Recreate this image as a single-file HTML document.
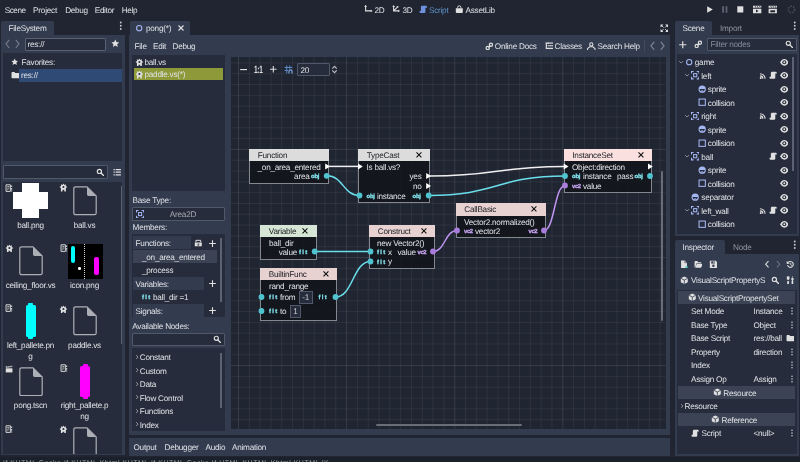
<!DOCTYPE html>
<html lang="en"><head><meta charset="utf-8"><title>Godot Engine - pong</title>
<style>
html,body{margin:0;padding:0}
.t,body{-webkit-font-smoothing:antialiased;text-rendering:geometricPrecision}
body{width:800px;height:462px;position:relative;overflow:hidden;background:#202531;color:#dfe1e5;
 font-family:"Liberation Sans",sans-serif;font-size:8.2px;}
#w{position:absolute;left:0;top:0;width:800px;height:462px;will-change:transform}
.a{position:absolute;display:block}
.t{position:absolute;display:block;line-height:12px;white-space:nowrap;letter-spacing:-0.25px}
</style></head><body><div id="w">
<span class="t" style="top:4.70px;left:4.8px;letter-spacing:-0.5px;">Scene</span>
<span class="t" style="top:4.70px;left:33px;letter-spacing:-0.2px;">Project</span>
<span class="t" style="top:4.70px;left:65.2px;letter-spacing:-0.3px;">Debug</span>
<span class="t" style="top:4.70px;left:94.8px;letter-spacing:-0.35px;">Editor</span>
<span class="t" style="top:4.70px;left:121.8px;letter-spacing:-0.4px;">Help</span>
<svg class="a" style="left:364px;top:5.0px;" width="8.6" height="8.6" viewBox="0 0 16 16"><path d="M3 1v10h10" stroke="#e0e0e0" stroke-width="2" fill="none"/><path d="M3 0L.500 3.500h5zM16 11l-3.500-2.500v5z" fill="#e0e0e0"/></svg>
<span class="t" style="top:4.70px;left:374.5px;">2D</span>
<svg class="a" style="left:392px;top:5.0px;" width="8.6" height="8.6" viewBox="0 0 16 16"><path d="M3 2v9h9M3 11L10 4" stroke="#e0e0e0" stroke-width="2" fill="none"/><path d="M3 0L.500 3.500h5zM15 11l-3.500-2.500v5zM12 2l-4 .500 3.500 3.500z" fill="#e0e0e0"/></svg>
<span class="t" style="top:4.70px;left:402.5px;">3D</span>
<svg class="a" style="left:419px;top:5.0px;" width="8.6" height="8.6" viewBox="0 0 16 16"><path d="M6 1.500c-1.400 0-2.500 1.100-2.500 2.500v7H1v1.500C1 13.900 2.100 15 3.500 15h6c1.400 0 2.500-1.100 2.500-2.500V5h3V4c0-1.400-1.100-2.500-2.500-2.500z" fill="#6f91dd"/></svg>
<span class="t" style="top:4.70px;left:429px;color:#5f93c9;">Script</span>
<svg class="a" style="left:455px;top:5.0px;" width="8.6" height="8.6" viewBox="0 0 16 16"><path d="M1.500 6h13v7.500c0 .800-.700 1.500-1.500 1.500H3c-.800 0-1.500-.700-1.500-1.500z" fill="#e0e0e0"/><path d="M5 6V4.500a3 3 0 0 1 6 0V6" stroke="#e0e0e0" stroke-width="1.800" fill="none"/></svg>
<span class="t" style="top:4.70px;left:465.5px;">AssetLib</span>
<svg class="a" style="left:700px;top:2px" width="100" height="16" viewBox="0 0 100 16"><path d="M7.200 4.200v6.600l5.600-3.300z" fill="#e0e0e0"/><path d="M22.200 4.300h1.800v6.400h-1.800zM25.600 4.300h1.800v6.400h-1.800z" fill="#5d6373"/><rect x="37.300" y="4.300" width="6" height="6.200" fill="#e0e0e0"/><path d="M53 6.700h8.300v4.500H53zM53 3.800h8.300v2H53z" fill="#e0e0e0"/><path d="M55 3.800l1 2M57.200 3.800l1 2M59.400 3.800l1 2" stroke="#202531" stroke-width=".7"/><path d="M56 7.500v2.900l2.600-1.450z" fill="#202531"/><path d="M68.600 6.700h8.300v4.500h-8.300zM68.600 3.800h8.300v2h-8.300z" fill="#e0e0e0"/><path d="M70.600 3.800l1 2M72.800 3.800l1 2M75 3.800l1 2" stroke="#202531" stroke-width=".7"/><path d="M70.300 8.300h4.800v2h-4.800z" fill="#202531"/><circle cx="91.500" cy="7.500" r="3.200" fill="none" stroke="#4a5060" stroke-width="1.400" stroke-dasharray="1.500 1.200"/></svg>
<div class="a" style="left:1px;top:21px;width:53.3px;height:15px;background:#333b4f;border-radius:2px 2px 0 0"></div>
<span class="t" style="top:22.80px;left:8.5px;">FileSystem</span>
<svg class="a" style="left:116.2px;top:20.55px;" width="9.5" height="9.5" viewBox="0 0 16 16"><circle cx="8" cy="2.500" r="1.600" fill="#c8cad0"/><circle cx="8" cy="8" r="1.600" fill="#c8cad0"/><circle cx="8" cy="13.500" r="1.600" fill="#c8cad0"/></svg>
<div class="a" style="left:1px;top:35px;width:124.3px;height:420px;background:#333b4f;"></div>
<svg class="a" style="left:4.5px;top:39.2px;" width="5" height="9.6" viewBox="0 0 5 9.600"><path d="M4.200 .800L1 4.800l3.200 4" stroke="#727989" stroke-width="1.150" fill="none"/></svg>
<svg class="a" style="left:15px;top:39.2px;" width="5" height="9.6" viewBox="0 0 5 9.600"><path d="M.800 .800L4 4.800l-3.200 4" stroke="#727989" stroke-width="1.150" fill="none"/></svg>
<div class="a" style="left:24.5px;top:37.5px;width:81px;height:13px;background:#262c3b;border:1px solid #5a6172;box-sizing:border-box;border-radius:1px"></div>
<span class="t" style="top:38.80px;left:27.5px;">res://</span>
<svg class="a" style="left:111px;top:39.2px;" width="8.6" height="8.6" viewBox="0 0 16 16"><path d="M8 1l2.200 4.700 5 .600-3.700 3.500 1 5L8 12.300 3.500 14.800l1-5L.800 6.300l5-.600z" fill="#e0e0e0"/></svg>
<div class="a" style="left:3px;top:53px;width:119.2px;height:108px;background:#262c3b;"></div>
<svg class="a" style="left:10.5px;top:58.25px;" width="7.5" height="7.5" viewBox="0 0 16 16"><path d="M8 1l2.200 4.700 5 .600-3.700 3.500 1 5L8 12.300 3.500 14.800l1-5L.800 6.300l5-.600z" fill="#e0e0e0"/></svg>
<span class="t" style="top:57.10px;left:21.5px;">Favorites:</span>
<div class="a" style="left:19px;top:69px;width:102.5px;height:12.5px;background:#2f4a75;"></div>
<svg class="a" style="left:10.5px;top:70.8px;" width="8.4" height="8.4" viewBox="0 0 16 16"><path d="M1 3.500c0-.800.700-1.500 1.500-1.500h4l1.500 2h6.500c.800 0 1.500.700 1.500 1.500v7c0 .800-.700 1.500-1.500 1.500h-12C1.700 14 1 13.300 1 12.500z" fill="#e0e0e0"/></svg>
<span class="t" style="top:70.40px;left:21px;">res://</span>
<div class="a" style="left:3px;top:165px;width:104.5px;height:14px;background:#262c3b;border:1px solid #50586a;box-sizing:border-box;border-radius:1px"></div>
<svg class="a" style="left:95.5px;top:167.8px;" width="8.4" height="8.4" viewBox="0 0 16 16"><circle cx="6.500" cy="6.500" r="4" fill="none" stroke="#e0e0e0" stroke-width="2.200"/><path d="M9.500 9.500l5 5" stroke="#e0e0e0" stroke-width="2.600" stroke-linecap="round"/></svg>
<svg class="a" style="left:112.5px;top:168.0px;" width="8.4" height="8.4" viewBox="0 0 16 16"><path d="M5 3h10M5 8h10M5 13h10" stroke="#e0e0e0" stroke-width="2.400"/><path d="M1 3h2.400M1 8h2.400M1 13h2.400" stroke="#e0e0e0" stroke-width="2.400"/></svg>
<div class="a" style="left:3px;top:182px;width:119.2px;height:271.5px;background:#262c3b;"></div>
<div class="a" style="left:120.5px;top:186px;width:1.3px;height:158px;background:#5b6272;"></div>
<svg class="a" style="left:4.8px;top:183.9px;" width="8.2" height="8.2" viewBox="0 0 16 16"><path d="M2 1.500h8.500V14.500H2z" fill="none" stroke="#e0e0e0" stroke-width="1.800"/><path d="M4.500 5h4M4.500 8h4M4.500 11h2" stroke="#e0e0e0" stroke-width="1.500"/><path d="M13 3v3M13 8v3M13 12.500v2" stroke="#e0e0e0" stroke-width="2"/></svg>
<div class="a" style="left:13px;top:191.5px;width:35px;height:17.6px;background:#fff;"></div>
<div class="a" style="left:21.8px;top:183px;width:17.6px;height:35px;background:#fff;"></div>
<span class="t" style="top:219.90px;left:-69.5px;width:200px;text-align:center;">ball.png</span>
<svg class="a" style="left:59px;top:183.1px;" width="8.8" height="8.8" viewBox="0 0 16 16"><path d="M8 .800l1.600 2.700 3-1.200-.400 3.200 3 1.800-2.700 1.700V15.500H9.600V12.300H6.400V15.500H3.500V9L.800 7.300l3-1.800-.400-3.200 3 1.200z" fill="#e0e0e0"/><circle cx="8" cy="7.300" r="1.900" fill="#262c3b"/></svg>
<svg class="a" style="left:73px;top:186px" width="24" height="29.5" viewBox="0 0 24 29.500"><path d="M2.500 .800h11.500l9.200 9.200v17c0 1-.700 1.700-1.700 1.700h-19c-1 0-1.700-.700-1.700-1.700v-24.500c0-1 .700-1.700 1.700-1.700z" fill="none" stroke="#adafb6" stroke-width="1.200"/><path d="M14 .800l9.200 9.200h-7.500c-1 0-1.700-.700-1.700-1.700z" fill="#adafb6"/></svg>
<span class="t" style="top:219.90px;left:-15.5px;width:200px;text-align:center;">ball.vs</span>
<svg class="a" style="left:4.8px;top:243.6px;" width="8.8" height="8.8" viewBox="0 0 16 16"><path d="M8 .800l1.600 2.700 3-1.200-.400 3.200 3 1.800-2.700 1.700V15.500H9.600V12.300H6.400V15.500H3.500V9L.800 7.300l3-1.800-.400-3.200 3 1.200z" fill="#e0e0e0"/><circle cx="8" cy="7.300" r="1.900" fill="#262c3b"/></svg>
<svg class="a" style="left:19px;top:246px" width="24" height="29.5" viewBox="0 0 24 29.500"><path d="M2.500 .800h11.500l9.200 9.200v17c0 1-.700 1.700-1.700 1.700h-19c-1 0-1.700-.700-1.700-1.700v-24.500c0-1 .700-1.700 1.700-1.700z" fill="none" stroke="#adafb6" stroke-width="1.200"/><path d="M14 .800l9.200 9.200h-7.500c-1 0-1.700-.700-1.700-1.700z" fill="#adafb6"/></svg>
<span class="t" style="top:280.20px;left:-69.5px;width:200px;text-align:center;">ceiling_floor.vs</span>
<svg class="a" style="left:59.5px;top:244.4px;" width="8.2" height="8.2" viewBox="0 0 16 16"><path d="M2 1.500h8.500V14.500H2z" fill="none" stroke="#e0e0e0" stroke-width="1.800"/><path d="M4.500 5h4M4.500 8h4M4.500 11h2" stroke="#e0e0e0" stroke-width="1.500"/><path d="M13 3v3M13 8v3M13 12.500v2" stroke="#e0e0e0" stroke-width="2"/></svg>
<div class="a" style="left:68px;top:244px;width:34.5px;height:34.5px;background:#000;"></div>
<div class="a" style="left:71px;top:246px;width:4.2px;height:17px;background:#00ffff;border-radius:2px"></div>
<div class="a" style="left:94.3px;top:257px;width:4.6px;height:17.5px;background:#ff00ff;border-radius:2px"></div>
<div class="a" style="left:77.8px;top:266.8px;width:3.4px;height:3.4px;background:#fff;border-radius:1.200px"></div>
<div class="a" style="left:84.3px;top:244px;width:0px;height:34.5px;border-left:1px dotted #d8d8d8"></div>
<span class="t" style="top:280.20px;left:-15.5px;width:200px;text-align:center;">icon.png</span>
<svg class="a" style="left:4.8px;top:304.4px;" width="8.2" height="8.2" viewBox="0 0 16 16"><path d="M2 1.500h8.500V14.500H2z" fill="none" stroke="#e0e0e0" stroke-width="1.800"/><path d="M4.500 5h4M4.500 8h4M4.500 11h2" stroke="#e0e0e0" stroke-width="1.500"/><path d="M13 3v3M13 8v3M13 12.500v2" stroke="#e0e0e0" stroke-width="2"/></svg>
<div class="a" style="left:26.2px;top:305.3px;width:9.5px;height:31.4px;background:#00ffff;border-radius:1.500px"></div>
<div class="a" style="left:28.4px;top:303.3px;width:5.1px;height:35.4px;background:#00ffff;border-radius:1px"></div>
<span class="t" style="top:340.20px;left:-69.5px;width:200px;text-align:center;">left_pallete.pn</span>
<span class="t" style="top:350.70px;left:-69.5px;width:200px;text-align:center;">g</span>
<svg class="a" style="left:59px;top:304.6px;" width="8.8" height="8.8" viewBox="0 0 16 16"><path d="M8 .800l1.600 2.700 3-1.200-.400 3.200 3 1.800-2.700 1.700V15.500H9.600V12.300H6.400V15.500H3.500V9L.800 7.300l3-1.800-.400-3.200 3 1.200z" fill="#e0e0e0"/><circle cx="8" cy="7.300" r="1.900" fill="#262c3b"/></svg>
<svg class="a" style="left:73px;top:306px" width="24" height="29.5" viewBox="0 0 24 29.500"><path d="M2.500 .800h11.500l9.200 9.200v17c0 1-.700 1.700-1.700 1.700h-19c-1 0-1.700-.700-1.700-1.700v-24.500c0-1 .700-1.700 1.700-1.700z" fill="none" stroke="#adafb6" stroke-width="1.200"/><path d="M14 .800l9.200 9.200h-7.500c-1 0-1.700-.700-1.700-1.700z" fill="#adafb6"/></svg>
<span class="t" style="top:340.20px;left:-15.5px;width:200px;text-align:center;">paddle.vs</span>
<svg class="a" style="left:4.8px;top:364.9px;" width="8.2" height="8.2" viewBox="0 0 16 16"><path d="M1.500 6.500h13v8h-13z" fill="#e0e0e0"/><path d="M1.500 2.500l12.500-1 .400 2.500-12.700 1.500z" fill="#e0e0e0"/><path d="M4 2l1.500 2.500M7.500 1.800L9 4.200M11 1.500l1.500 2.400" stroke="#262c3b" stroke-width="1.400"/></svg>
<svg class="a" style="left:19px;top:366.5px" width="24" height="29.5" viewBox="0 0 24 29.500"><path d="M2.500 .800h11.500l9.200 9.200v17c0 1-.700 1.700-1.700 1.700h-19c-1 0-1.700-.700-1.700-1.700v-24.500c0-1 .700-1.700 1.700-1.700z" fill="none" stroke="#adafb6" stroke-width="1.200"/><path d="M14 .800l9.200 9.200h-7.500c-1 0-1.700-.700-1.700-1.700z" fill="#adafb6"/></svg>
<span class="t" style="top:400.20px;left:-69.5px;width:200px;text-align:center;">pong.tscn</span>
<svg class="a" style="left:59.5px;top:364.4px;" width="8.2" height="8.2" viewBox="0 0 16 16"><path d="M2 1.500h8.500V14.500H2z" fill="none" stroke="#e0e0e0" stroke-width="1.800"/><path d="M4.500 5h4M4.500 8h4M4.500 11h2" stroke="#e0e0e0" stroke-width="1.500"/><path d="M13 3v3M13 8v3M13 12.500v2" stroke="#e0e0e0" stroke-width="2"/></svg>
<div class="a" style="left:80.4px;top:365.6px;width:9.5px;height:31.4px;background:#ff00ff;border-radius:1.500px"></div>
<div class="a" style="left:82.6px;top:363.6px;width:5.1px;height:35.4px;background:#ff00ff;border-radius:1px"></div>
<span class="t" style="top:400.20px;left:-15.5px;width:200px;text-align:center;">right_pallete.p</span>
<span class="t" style="top:410.70px;left:-15.5px;width:200px;text-align:center;">ng</span>
<svg class="a" style="left:4.8px;top:424.9px;" width="8.2" height="8.2" viewBox="0 0 16 16"><path d="M2 1.500h8.500V14.500H2z" fill="none" stroke="#e0e0e0" stroke-width="1.800"/><path d="M4.500 5h4M4.500 8h4M4.500 11h2" stroke="#e0e0e0" stroke-width="1.500"/><path d="M13 3v3M13 8v3M13 12.500v2" stroke="#e0e0e0" stroke-width="2"/></svg>
<svg class="a" style="left:59px;top:424.6px;" width="8.8" height="8.8" viewBox="0 0 16 16"><path d="M8 .800l1.600 2.700 3-1.200-.400 3.200 3 1.800-2.700 1.700V15.500H9.600V12.300H6.400V15.500H3.500V9L.800 7.300l3-1.800-.400-3.200 3 1.200z" fill="#e0e0e0"/><circle cx="8" cy="7.300" r="1.900" fill="#262c3b"/></svg>
<div class="a" style="left:73px;top:427px;width:24px;height:26.500px;overflow:hidden">
<svg class="a" style="left:0px;top:0px" width="24" height="29.5" viewBox="0 0 24 29.500"><path d="M2.500 .800h11.500l9.200 9.200v17c0 1-.700 1.700-1.700 1.700h-19c-1 0-1.700-.700-1.700-1.700v-24.500c0-1 .700-1.700 1.700-1.700z" fill="none" stroke="#adafb6" stroke-width="1.200"/><path d="M14 .800l9.200 9.200h-7.500c-1 0-1.700-.700-1.700-1.700z" fill="#adafb6"/></svg>
</div>
<div class="a" style="left:130px;top:21px;width:59.5px;height:15px;background:#333b4f;border-radius:2px 2px 0 0"></div>
<svg class="a" style="left:135px;top:23.6px;" width="8.4" height="8.4" viewBox="0 0 16 16"><circle cx="8" cy="8" r="5" fill="none" stroke="#a5b7f3" stroke-width="2"/></svg>
<span class="t" style="top:22.80px;left:146px;">pong(*)</span>
<svg class="a" style="left:177.3px;top:23.8px;" width="8" height="8" viewBox="0 0 16 16"><path d="M3 3l10 10M13 3L3 13" stroke="#e0e0e0" stroke-width="2.200" fill="none"/></svg>
<div class="a" style="left:129.3px;top:35px;width:540.7px;height:399.6px;background:#333b4f;"></div>
<svg class="a" style="left:659.5px;top:23.5px;" width="8.6" height="8.6" viewBox="0 0 16 16"><path d="M1 1h5.500L1 6.500zM15 1v5.500L9.500 1zM15 15H9.500L15 9.500zM1 15V9.500L6.500 15z" fill="#e0e0e0"/><path d="M3 3l3.500 3.500M13 3L9.500 6.500M13 13L9.500 9.500M3 13l3.500-3.500" stroke="#e0e0e0" stroke-width="1.800"/></svg>
<span class="t" style="top:41.10px;left:134.5px;">File</span>
<span class="t" style="top:41.10px;left:153px;">Edit</span>
<span class="t" style="top:41.10px;left:172.5px;">Debug</span>
<svg class="a" style="left:485px;top:41.7px;" width="8.6" height="8.6" viewBox="0 0 16 16"><circle cx="5" cy="11" r="3" fill="none" stroke="#e0e0e0" stroke-width="2.200"/><circle cx="11" cy="5" r="3" fill="none" stroke="#e0e0e0" stroke-width="2.200"/><path d="M6 10l4-4" stroke="#e0e0e0" stroke-width="2.400"/></svg>
<span class="t" style="top:41.10px;left:494.8px;">Online Docs</span>
<svg class="a" style="left:544.5px;top:41.7px;" width="8.6" height="8.6" viewBox="0 0 16 16"><path d="M1 2h6M5 7h10M5 12h10M2.500 2v10h2.500" stroke="#e0e0e0" stroke-width="2.200" fill="none"/><path d="M5 2h10" stroke="#e0e0e0" stroke-width="2.200"/></svg>
<span class="t" style="top:41.10px;left:554.5px;">Classes</span>
<svg class="a" style="left:587px;top:41.7px;" width="8.6" height="8.6" viewBox="0 0 16 16"><circle cx="8" cy="4.500" r="3" fill="none" stroke="#e0e0e0" stroke-width="2"/><path d="M1 15v-2.500L5 9h6l4 3.500V15" stroke="#e0e0e0" stroke-width="2" fill="none"/></svg>
<span class="t" style="top:41.10px;left:597.5px;">Search Help</span>
<div class="a" style="left:643.5px;top:40px;width:1px;height:12px;background:#424a5e;"></div>
<svg class="a" style="left:649.5px;top:40.6px;" width="5" height="9.6" viewBox="0 0 5 9.600"><path d="M4.200 .800L1 4.800l3.200 4" stroke="#7a8192" stroke-width="1.300" fill="none"/></svg>
<svg class="a" style="left:659.8px;top:40.6px;" width="5" height="9.6" viewBox="0 0 5 9.600"><path d="M.800 .800L4 4.800l-3.200 4" stroke="#7a8192" stroke-width="1.300" fill="none"/></svg>
<div class="a" style="left:132px;top:55px;width:93px;height:135.5px;background:#262c3b;"></div>
<svg class="a" style="left:135px;top:57.6px;" width="8.8" height="8.8" viewBox="0 0 16 16"><path d="M8 .800l1.600 2.700 3-1.200-.400 3.200 3 1.800-2.700 1.700V15.500H9.600V12.300H6.400V15.500H3.500V9L.800 7.300l3-1.800-.400-3.200 3 1.200z" fill="#e0e0e0"/><circle cx="8" cy="7.300" r="1.900" fill="#262c3b"/></svg>
<span class="t" style="top:57.10px;left:144.5px;">ball.vs</span>
<div class="a" style="left:134px;top:68px;width:89px;height:12.3px;background:#8e9a3a;"></div>
<svg class="a" style="left:135px;top:69.9px;" width="8.8" height="8.8" viewBox="0 0 16 16"><path d="M8 .800l1.600 2.700 3-1.200-.400 3.200 3 1.800-2.700 1.700V15.500H9.600V12.300H6.400V15.500H3.500V9L.800 7.300l3-1.800-.400-3.200 3 1.200z" fill="#e0e0e0"/><circle cx="8" cy="7.300" r="1.900" fill="#262c3b"/></svg>
<span class="t" style="top:69.40px;left:144.5px;">paddle.vs(*)</span>
<span class="t" style="top:194.90px;left:132.6px;">Base Type:</span>
<div class="a" style="left:132px;top:207px;width:93px;height:13.5px;background:#262c3b;border:1px solid #50586a;box-sizing:border-box;border-radius:1px"></div>
<svg class="a" style="left:135.5px;top:209.7px;" width="8.2" height="8.2" viewBox="0 0 16 16"><rect x="5" y="5" width="6" height="6" fill="none" stroke="#a5b7f3" stroke-width="2"/><path d="M1 5V1h4M11 1h4v4M15 11v4h-4M5 15H1v-4" fill="none" stroke="#a5b7f3" stroke-width="2"/></svg>
<span class="t" style="top:208.80px;left:83px;width:200px;text-align:center;color:#a4a8b2;">Area2D</span>
<span class="t" style="top:221.90px;left:132.6px;">Members:</span>
<div class="a" style="left:132px;top:234px;width:93px;height:83px;background:#262c3b;"></div>
<div class="a" style="left:133.2px;top:236px;width:57.8px;height:13px;background:#333b4f;"></div>
<span class="t" style="top:238.00px;left:135.6px;">Functions:</span>
<svg class="a" style="left:193.5px;top:238.7px;" width="8.6" height="8.6" viewBox="0 0 16 16"><path d="M1.500 6.500h13v7h-13z" fill="#e0e0e0"/><path d="M3.500 6V2.500h9V6" stroke="#e0e0e0" stroke-width="1.800" fill="none"/><path d="M8 8v4M6 10.200l2 2 2-2" stroke="#262c3b" stroke-width="1.400" fill="none"/></svg>
<svg class="a" style="left:207.5px;top:238.5px;" width="9" height="9" viewBox="0 0 16 16"><path d="M8 2v12M2 8h12" stroke="#e0e0e0" stroke-width="2" fill="none"/></svg>
<div class="a" style="left:133.2px;top:250px;width:83.5px;height:13px;background:#3c4354;"></div>
<span class="t" style="top:251.60px;left:142px;">_on_area_entered</span>
<span class="t" style="top:265.10px;left:142px;">_process</span>
<div class="a" style="left:133.2px;top:277px;width:70.6px;height:13px;background:#333b4f;"></div>
<span class="t" style="top:278.50px;left:135.6px;">Variables:</span>
<svg class="a" style="left:207.5px;top:279.0px;" width="9" height="9" viewBox="0 0 16 16"><path d="M8 2v12M2 8h12" stroke="#e0e0e0" stroke-width="2" fill="none"/></svg>
<span class="t" style="top:291.70px;left:142px;color:#86e8f2;font-size:5.9px;font-weight:bold;letter-spacing:1.350px;-webkit-text-stroke:.250px #86e8f2">flt</span>
<span class="t" style="top:292.10px;left:153px;">ball_dir =1</span>
<div class="a" style="left:133.2px;top:304px;width:70.6px;height:13px;background:#333b4f;"></div>
<span class="t" style="top:305.50px;left:135.6px;">Signals:</span>
<svg class="a" style="left:207.5px;top:306.0px;" width="9" height="9" viewBox="0 0 16 16"><path d="M8 2v12M2 8h12" stroke="#e0e0e0" stroke-width="2" fill="none"/></svg>
<div class="a" style="left:220px;top:238px;width:1.5px;height:64px;background:#5b6272;"></div>
<span class="t" style="top:320.50px;left:132.3px;">Available Nodes:</span>
<div class="a" style="left:132px;top:332.5px;width:93px;height:13.5px;background:#262c3b;border:1px solid #50586a;box-sizing:border-box;border-radius:1px"></div>
<svg class="a" style="left:212.5px;top:335.2px;" width="8.2" height="8.2" viewBox="0 0 16 16"><circle cx="6.500" cy="6.500" r="4" fill="none" stroke="#e0e0e0" stroke-width="2.200"/><path d="M9.500 9.500l5 5" stroke="#e0e0e0" stroke-width="2.600" stroke-linecap="round"/></svg>
<div class="a" style="left:132px;top:348px;width:93px;height:82.5px;background:#262c3b;"></div>
<div class="a" style="left:220px;top:353px;width:1.5px;height:55px;background:#5b6272;"></div>
<svg class="a" style="left:133.6px;top:353.7px;" width="6.2" height="6.2" viewBox="0 0 16 16"><path d="M5.500 3l5 5-5 5" stroke="#b2b6bf" stroke-width="2" fill="none"/></svg>
<span class="t" style="top:352.00px;left:139.8px;">Constant</span>
<svg class="a" style="left:133.6px;top:367.2px;" width="6.2" height="6.2" viewBox="0 0 16 16"><path d="M5.500 3l5 5-5 5" stroke="#b2b6bf" stroke-width="2" fill="none"/></svg>
<span class="t" style="top:365.50px;left:139.8px;">Custom</span>
<svg class="a" style="left:133.6px;top:380.7px;" width="6.2" height="6.2" viewBox="0 0 16 16"><path d="M5.500 3l5 5-5 5" stroke="#b2b6bf" stroke-width="2" fill="none"/></svg>
<span class="t" style="top:379.00px;left:139.8px;">Data</span>
<svg class="a" style="left:133.6px;top:394.2px;" width="6.2" height="6.2" viewBox="0 0 16 16"><path d="M5.500 3l5 5-5 5" stroke="#b2b6bf" stroke-width="2" fill="none"/></svg>
<span class="t" style="top:392.50px;left:139.8px;">Flow Control</span>
<svg class="a" style="left:133.6px;top:407.7px;" width="6.2" height="6.2" viewBox="0 0 16 16"><path d="M5.500 3l5 5-5 5" stroke="#b2b6bf" stroke-width="2" fill="none"/></svg>
<span class="t" style="top:406.00px;left:139.8px;">Functions</span>
<svg class="a" style="left:133.6px;top:421.2px;" width="6.2" height="6.2" viewBox="0 0 16 16"><path d="M5.500 3l5 5-5 5" stroke="#b2b6bf" stroke-width="2" fill="none"/></svg>
<span class="t" style="top:419.50px;left:139.8px;">Index</span>
<div class="a" id="g" style="left:231px;top:57px;width:434.5px;height:372px;overflow:hidden;background:#202532">
<svg class="a" style="left:0;top:0" width="434.5" height="372" viewBox="231 57 434.5 372"><path d="M249.31 57V429M260.12 57V429M270.93 57V429M281.74 57V429M292.55 57V429M303.36 57V429M314.17 57V429M324.98 57V429M335.79 57V429M357.41 57V429M368.22 57V429M379.03 57V429M389.84 57V429M400.65 57V429M411.46 57V429M422.27 57V429M433.08 57V429M443.89 57V429M465.51 57V429M476.32 57V429M487.13 57V429M497.94 57V429M508.75 57V429M519.56 57V429M530.37 57V429M541.18 57V429M551.99 57V429M573.61 57V429M584.42 57V429M595.23 57V429M606.04 57V429M616.85 57V429M627.66 57V429M638.47 57V429M649.28 57V429M660.09 57V429M231 62.92H665.5M231 73.73H665.5M231 84.54H665.5M231 95.35H665.5M231 106.16H665.5M231 116.97H665.5M231 127.78H665.5M231 138.59H665.5M231 160.21H665.5M231 171.02H665.5M231 181.83H665.5M231 192.64H665.5M231 203.45H665.5M231 214.26H665.5M231 225.07H665.5M231 235.88H665.5M231 246.69H665.5M231 268.31H665.5M231 279.12H665.5M231 289.93H665.5M231 300.74H665.5M231 311.55H665.5M231 322.36H665.5M231 333.17H665.5M231 343.98H665.5M231 354.79H665.5M231 376.41H665.5M231 387.22H665.5M231 398.03H665.5M231 408.84H665.5M231 419.65H665.5" stroke="#ffffff" stroke-opacity=".10" stroke-width=".65" fill="none"/><path d="M238.50 57V429M346.60 57V429M454.70 57V429M562.80 57V429M231 149.40H665.5M231 257.50H665.5M231 365.60H665.5" stroke="#ffffff" stroke-opacity=".17" stroke-width=".65" fill="none"/></svg>
<svg class="a" style="left:7.7px;top:7.8px;" width="9.2" height="9.2" viewBox="0 0 16 16"><path d="M2 8h12" stroke="#e0e0e0" stroke-width="2" fill="none"/></svg>
<span class="t" style="top:7.00px;left:22.60px;color:#e0e0e0;font-size:10.5px;font-weight:bold;letter-spacing:-.4px;transform:scaleX(.62);transform-origin:0 50%">1:1</span>
<svg class="a" style="left:38px;top:8.2px;" width="8.6" height="8.6" viewBox="0 0 16 16"><path d="M8 2v12M2 8h12" stroke="#e0e0e0" stroke-width="2" fill="none"/></svg>
<svg class="a" style="left:53px;top:7.8px;" width="8.8" height="8.8" viewBox="0 0 16 16"><path d="M5 1v14M10.500 1v6M1 4.500h14M1 10h6" stroke="#5a89c8" stroke-width="1.900" fill="none"/><path d="M9 15.500v-3.700a2.800 2.800 0 0 1 5.600 0v3.700" stroke="#7ba7e2" stroke-width="2.200" fill="none"/></svg>
<div class="a" style="left:66px;top:6px;width:32.5px;height:13.3px;background:#262c3b;border:1px solid #50586a;box-sizing:border-box;border-radius:1px"></div>
<span class="t" style="top:7.70px;left:69.50px;">20</span>
<svg class="a" style="left:98.8px;top:7.8px;" width="9" height="9" viewBox="0 0 16 16"><path d="M4 6.500L8 2.500l4 4M4 9.500l4 4 4-4" stroke="#babdc5" stroke-width="2" fill="none"/></svg>
<div class="a" style="left:430.2px;top:114px;width:2px;height:150px;background:#696d78;border-radius:1px"></div>
<div class="a" style="left:145px;top:367.2px;width:146px;height:2px;background:#696d78;border-radius:1px"></div>
<div class="a" style="left:18px;top:92px;width:80.3px;height:34.7px;background:rgba(18,20,27,.88);border:1px solid #85878f;box-sizing:border-box"></div>
<div class="a" style="left:18px;top:92px;width:80.3px;height:12.3px;background:#dcdcdc;"></div>
<span class="t" style="top:93.00px;left:26.80px;color:#1b1d22;">Function</span>
<span class="t" style="top:104.60px;right:345.00px;">_on_area_entered</span>
<span class="t" style="top:114.00px;right:356.00px;">area</span>
<span class="t" style="top:114.00px;left:80.00px;color:#86e8f2;font-size:5.9px;font-weight:bold;letter-spacing:-0.2px;-webkit-text-stroke:.25px #86e8f2">obj</span>
<div class="a" style="left:127px;top:92px;width:72.3px;height:53.6px;background:rgba(18,20,27,.88);border:1px solid #85878f;box-sizing:border-box"></div>
<div class="a" style="left:127px;top:92px;width:72.3px;height:12.3px;background:#dcdcdc;"></div>
<span class="t" style="top:93.00px;left:135.80px;color:#1b1d22;">TypeCast</span>
<svg class="a" style="left:183.7px;top:94.15px;" width="7.9" height="7.9" viewBox="0 0 16 16"><path d="M3 3l10 10M13 3L3 13" stroke="#101010" stroke-width="2.200" fill="none"/></svg>
<span class="t" style="top:104.60px;left:135.50px;">Is ball.vs?</span>
<span class="t" style="top:114.00px;right:244.00px;">yes</span>
<span class="t" style="top:124.00px;right:244.00px;">no</span>
<span class="t" style="top:133.50px;left:135.50px;color:#86e8f2;font-size:5.9px;font-weight:bold;letter-spacing:-0.2px;-webkit-text-stroke:.25px #86e8f2">obj</span>
<span class="t" style="top:133.60px;left:146.00px;">instance</span>
<span class="t" style="top:133.50px;left:181.50px;color:#86e8f2;font-size:5.9px;font-weight:bold;letter-spacing:-0.2px;-webkit-text-stroke:.25px #86e8f2">obj</span>
<div class="a" style="left:332.5px;top:92px;width:88.6px;height:44.2px;background:rgba(18,20,27,.88);border:1px solid #85878f;box-sizing:border-box"></div>
<div class="a" style="left:332.5px;top:92px;width:88.6px;height:12.3px;background:#fbe0e0;"></div>
<span class="t" style="top:93.00px;left:341.30px;color:#1b1d22;">InstanceSet</span>
<svg class="a" style="left:405.5px;top:94.15px;" width="7.9" height="7.9" viewBox="0 0 16 16"><path d="M3 3l10 10M13 3L3 13" stroke="#101010" stroke-width="2.200" fill="none"/></svg>
<span class="t" style="top:104.60px;left:341.00px;">Object:direction</span>
<span class="t" style="top:114.00px;left:341.00px;color:#86e8f2;font-size:5.9px;font-weight:bold;letter-spacing:-0.2px;-webkit-text-stroke:.25px #86e8f2">obj</span>
<span class="t" style="top:114.10px;left:352.00px;">instance</span>
<span class="t" style="top:114.10px;left:386.00px;">pass</span>
<span class="t" style="top:114.00px;left:403.50px;color:#86e8f2;font-size:5.9px;font-weight:bold;letter-spacing:-0.2px;-webkit-text-stroke:.25px #86e8f2">obj</span>
<span class="t" style="top:123.50px;left:341.00px;color:#cba8f6;font-size:5.9px;font-weight:bold;letter-spacing:-0.35px;-webkit-text-stroke:.25px #cba8f6">vc2</span>
<span class="t" style="top:123.60px;left:352.00px;">value</span>
<div class="a" style="left:224.5px;top:146.3px;width:90.2px;height:34.3px;background:rgba(18,20,27,.88);border:1px solid #85878f;box-sizing:border-box"></div>
<div class="a" style="left:224.5px;top:146.3px;width:90.2px;height:12.3px;background:#e7d1d1;"></div>
<span class="t" style="top:147.30px;left:233.30px;color:#1b1d22;">CallBasic</span>
<svg class="a" style="left:299.1px;top:148.45px;" width="7.9" height="7.9" viewBox="0 0 16 16"><path d="M3 3l10 10M13 3L3 13" stroke="#101010" stroke-width="2.200" fill="none"/></svg>
<span class="t" style="top:159.50px;left:233.00px;">Vector2.normalized()</span>
<span class="t" style="top:168.50px;left:233.00px;color:#cba8f6;font-size:5.9px;font-weight:bold;letter-spacing:-0.35px;-webkit-text-stroke:.25px #cba8f6">vc2</span>
<span class="t" style="top:168.60px;left:244.00px;">vector2</span>
<span class="t" style="top:168.50px;left:297.50px;color:#cba8f6;font-size:5.9px;font-weight:bold;letter-spacing:-0.35px;-webkit-text-stroke:.25px #cba8f6">vc2</span>
<div class="a" style="left:29px;top:168px;width:57px;height:34.5px;background:rgba(18,20,27,.88);border:1px solid #85878f;box-sizing:border-box"></div>
<div class="a" style="left:29px;top:168px;width:57px;height:12.3px;background:#d6e6d6;"></div>
<span class="t" style="top:169.00px;left:37.80px;color:#1b1d22;">Variable</span>
<svg class="a" style="left:70.4px;top:170.15px;" width="7.9" height="7.9" viewBox="0 0 16 16"><path d="M3 3l10 10M13 3L3 13" stroke="#101010" stroke-width="2.200" fill="none"/></svg>
<span class="t" style="top:180.50px;left:38.00px;">ball_dir</span>
<span class="t" style="top:189.60px;right:368.50px;">value</span>
<span class="t" style="top:189.50px;left:68.00px;color:#86e8f2;font-size:5.9px;font-weight:bold;letter-spacing:1.35px;-webkit-text-stroke:.25px #86e8f2">flt</span>
<div class="a" style="left:138px;top:168px;width:66.2px;height:43.7px;background:rgba(18,20,27,.88);border:1px solid #85878f;box-sizing:border-box"></div>
<div class="a" style="left:138px;top:168px;width:66.2px;height:12.3px;background:#e7d1d1;"></div>
<span class="t" style="top:169.00px;left:146.80px;color:#1b1d22;">Construct</span>
<svg class="a" style="left:188.6px;top:170.15px;" width="7.9" height="7.9" viewBox="0 0 16 16"><path d="M3 3l10 10M13 3L3 13" stroke="#101010" stroke-width="2.200" fill="none"/></svg>
<span class="t" style="top:180.50px;left:146.00px;">new Vector2()</span>
<span class="t" style="top:189.50px;left:146.00px;color:#86e8f2;font-size:5.9px;font-weight:bold;letter-spacing:1.35px;-webkit-text-stroke:.25px #86e8f2">flt</span>
<span class="t" style="top:189.60px;left:157.00px;">x</span>
<span class="t" style="top:189.60px;left:166.50px;">value</span>
<span class="t" style="top:189.50px;left:186.50px;color:#cba8f6;font-size:5.9px;font-weight:bold;letter-spacing:-0.35px;-webkit-text-stroke:.25px #cba8f6">vc2</span>
<span class="t" style="top:199.50px;left:146.00px;color:#86e8f2;font-size:5.9px;font-weight:bold;letter-spacing:1.35px;-webkit-text-stroke:.25px #86e8f2">flt</span>
<span class="t" style="top:199.40px;left:157.00px;">y</span>
<div class="a" style="left:29px;top:211.2px;width:77.2px;height:52.4px;background:rgba(18,20,27,.88);border:1px solid #85878f;box-sizing:border-box"></div>
<div class="a" style="left:29px;top:211.2px;width:77.2px;height:12.3px;background:#e7d1d1;"></div>
<span class="t" style="top:212.20px;left:37.80px;color:#1b1d22;">BuiltinFunc</span>
<svg class="a" style="left:90.6px;top:213.35px;" width="7.9" height="7.9" viewBox="0 0 16 16"><path d="M3 3l10 10M13 3L3 13" stroke="#101010" stroke-width="2.200" fill="none"/></svg>
<span class="t" style="top:224.00px;left:38.00px;">rand_range</span>
<span class="t" style="top:235.00px;left:38.00px;color:#86e8f2;font-size:5.9px;font-weight:bold;letter-spacing:1.35px;-webkit-text-stroke:.25px #86e8f2">flt</span>
<span class="t" style="top:235.10px;left:49.00px;">from</span>
<div class="a" style="left:68px;top:233.5px;width:13.5px;height:13.2px;background:#262c3b;border:1px solid #50586a;box-sizing:border-box"></div>
<span class="t" style="top:235.10px;left:71.30px;color:#c9ccd2;">-1</span>
<span class="t" style="top:235.00px;left:87.50px;color:#86e8f2;font-size:5.9px;font-weight:bold;letter-spacing:1.35px;-webkit-text-stroke:.25px #86e8f2">flt</span>
<span class="t" style="top:249.00px;left:38.00px;color:#86e8f2;font-size:5.9px;font-weight:bold;letter-spacing:1.35px;-webkit-text-stroke:.25px #86e8f2">flt</span>
<span class="t" style="top:249.10px;left:49.00px;">to</span>
<div class="a" style="left:58.5px;top:247.5px;width:11.7px;height:13.2px;background:#262c3b;border:1px solid #50586a;box-sizing:border-box"></div>
<span class="t" style="top:249.10px;left:62.30px;color:#c9ccd2;">1</span>
<svg class="a" style="left:0;top:0" width="434.5" height="372" viewBox="231 57 434.5 372"><path d="M329 166.4C343.5 166.4 343.5 166.4 358 166.4" stroke="#f0f0f0" stroke-width="1.5" fill="none"/><path d="M327 175.8C343.2 175.8 343.2 195.5 359.5 195.5" stroke="#6adfeb" stroke-width="1.5" fill="none"/><path d="M430 176C497.0 176 497.0 166.4 564 166.4" stroke="#f0f0f0" stroke-width="1.5" fill="none"/><path d="M429 195.5C497.0 195.5 497.0 176 565 176" stroke="#6adfeb" stroke-width="1.5" fill="none"/><path d="M315 251.5C342.8 251.5 342.8 251.5 370.5 251.5" stroke="#6adfeb" stroke-width="1.5" fill="none"/><path d="M335.5 297C353.0 297 353.0 261.5 370.5 261.5" stroke="#6adfeb" stroke-width="1.5" fill="none"/><path d="M433 251.5C445.0 251.5 445.0 230.5 457 230.5" stroke="#c096f0" stroke-width="1.5" fill="none"/><path d="M544 230.5C554.5 230.5 554.5 185.5 565 185.5" stroke="#c096f0" stroke-width="1.5" fill="none"/><path d="M325.2 163.4l4.800 3-4.800 3z" fill="#ffffff"/><path d="M358 163.4l4.800 3-4.800 3z" fill="#ffffff"/><path d="M426.2 173l4.800 3-4.800 3z" fill="#ffffff"/><path d="M426.2 183l4.800 3-4.800 3z" fill="#ffffff"/><path d="M563.7 163.4l4.800 3-4.800 3z" fill="#ffffff"/><path d="M648 163.4l4.800 3-4.800 3z" fill="#ffffff"/><circle cx="326.7" cy="175.8" r="2.900" fill="#4fc3cf"/><circle cx="359.5" cy="195.5" r="2.900" fill="#4fc3cf"/><circle cx="428.7" cy="195.5" r="2.900" fill="#4fc3cf"/><circle cx="565" cy="176" r="2.900" fill="#4fc3cf"/><circle cx="650" cy="176" r="2.900" fill="#4fc3cf"/><circle cx="314.7" cy="251.5" r="2.900" fill="#4fc3cf"/><circle cx="370.5" cy="251.5" r="2.900" fill="#4fc3cf"/><circle cx="370.5" cy="261.5" r="2.900" fill="#4fc3cf"/><circle cx="261.5" cy="297" r="2.900" fill="#4fc3cf"/><circle cx="261.5" cy="311" r="2.900" fill="#4fc3cf"/><circle cx="335.5" cy="297" r="2.900" fill="#4fc3cf"/><circle cx="433" cy="251.5" r="2.900" fill="#a87ddb"/><circle cx="457" cy="230.5" r="2.900" fill="#a87ddb"/><circle cx="544" cy="230.5" r="2.900" fill="#a87ddb"/><circle cx="565" cy="185.5" r="2.900" fill="#a87ddb"/></svg>
</div>
<div class="a" style="left:129.3px;top:438px;width:540.7px;height:18px;background:#333b4f;"></div>
<span class="t" style="top:441.50px;left:133.5px;">Output</span>
<span class="t" style="top:441.50px;left:164.5px;">Debugger</span>
<span class="t" style="top:441.50px;left:205.5px;">Audio</span>
<span class="t" style="top:441.50px;left:232px;">Animation</span>
<div class="a" style="left:674.5px;top:21px;width:37.2px;height:15px;background:#333b4f;border-radius:2px 2px 0 0"></div>
<span class="t" style="top:22.80px;left:682.5px;">Scene</span>
<span class="t" style="top:22.80px;left:720px;color:#8e939e;">Import</span>
<svg class="a" style="left:789.6px;top:20.55px;" width="9.5" height="9.5" viewBox="0 0 16 16"><circle cx="8" cy="2.500" r="1.600" fill="#c8cad0"/><circle cx="8" cy="8" r="1.600" fill="#c8cad0"/><circle cx="8" cy="13.500" r="1.600" fill="#c8cad0"/></svg>
<div class="a" style="left:674.5px;top:35px;width:124.5px;height:201px;background:#333b4f;"></div>
<svg class="a" style="left:678.2px;top:39.55px;" width="9.5" height="9.5" viewBox="0 0 16 16"><path d="M8 2v12M2 8h12" stroke="#e0e0e0" stroke-width="2" fill="none"/></svg>
<svg class="a" style="left:693.5px;top:40.0px;" width="8.6" height="8.6" viewBox="0 0 16 16"><circle cx="5" cy="11" r="3" fill="none" stroke="#e0e0e0" stroke-width="2.200"/><circle cx="11" cy="5" r="3" fill="none" stroke="#e0e0e0" stroke-width="2.200"/><path d="M6 10l4-4" stroke="#e0e0e0" stroke-width="2.400"/></svg>
<div class="a" style="left:707px;top:38px;width:90px;height:13px;background:#262c3b;border:1px solid #50586a;box-sizing:border-box;border-radius:1px"></div>
<span class="t" style="top:39.40px;left:710.5px;color:#868b98;">Filter nodes</span>
<svg class="a" style="left:784.5px;top:40.2px;" width="8.2" height="8.2" viewBox="0 0 16 16"><circle cx="6.500" cy="6.500" r="4" fill="none" stroke="#e0e0e0" stroke-width="2.200"/><path d="M9.500 9.500l5 5" stroke="#e0e0e0" stroke-width="2.600" stroke-linecap="round"/></svg>
<div class="a" style="left:676.5px;top:53.5px;width:120.5px;height:180.2px;background:#262c3b;"></div>
<div class="a" style="left:792.3px;top:57px;width:1.5px;height:114px;background:#5b6272;"></div>
<svg class="a" style="left:677.6px;top:58.6px;" width="6.2" height="6.2" viewBox="0 0 16 16"><path d="M3 5.500l5 5 5-5" stroke="#a4a9b4" stroke-width="2" fill="none"/></svg>
<svg class="a" style="left:684.5px;top:57.8px;" width="8.4" height="8.4" viewBox="0 0 16 16"><circle cx="8" cy="8" r="5" fill="none" stroke="#a5b7f3" stroke-width="2"/></svg>
<span class="t" style="top:57.20px;left:694.8px;">game</span>
<svg class="a" style="left:779.5px;top:57.7px;" width="8.6" height="8.6" viewBox="0 0 16 16"><path d="M8 1.800C4.500 1.800 1.600 4.300.500 8c1.100 3.700 4 6.200 7.500 6.200s6.400-2.500 7.500-6.200C14.400 4.300 11.500 1.800 8 1.800z" fill="#e0e0e0"/><circle cx="8" cy="8" r="3.700" fill="#262c3b"/><circle cx="8" cy="8" r="1.800" fill="#e0e0e0"/></svg>
<svg class="a" style="left:684.1px;top:72.1px;" width="6.2" height="6.2" viewBox="0 0 16 16"><path d="M3 5.500l5 5 5-5" stroke="#a4a9b4" stroke-width="2" fill="none"/></svg>
<svg class="a" style="left:691px;top:71.3px;" width="8.4" height="8.4" viewBox="0 0 16 16"><rect x="5" y="5" width="6" height="6" fill="none" stroke="#a5b7f3" stroke-width="2"/><path d="M1 5V1h4M11 1h4v4M15 11v4h-4M5 15H1v-4" fill="none" stroke="#a5b7f3" stroke-width="2"/></svg>
<span class="t" style="top:70.70px;left:701.3px;">left</span>
<svg class="a" style="left:779.5px;top:71.2px;" width="8.6" height="8.6" viewBox="0 0 16 16"><path d="M8 1.800C4.500 1.800 1.600 4.300.500 8c1.100 3.700 4 6.200 7.500 6.200s6.400-2.500 7.500-6.200C14.400 4.300 11.500 1.800 8 1.800z" fill="#e0e0e0"/><circle cx="8" cy="8" r="3.700" fill="#262c3b"/><circle cx="8" cy="8" r="1.800" fill="#e0e0e0"/></svg>
<svg class="a" style="left:769px;top:71.3px;" width="8.4" height="8.4" viewBox="0 0 16 16"><path d="M6 1.500c-1.400 0-2.500 1.100-2.500 2.500v7H1v1.500C1 13.900 2.100 15 3.500 15h6c1.400 0 2.500-1.100 2.500-2.500V5h3V4c0-1.400-1.100-2.500-2.500-2.500z" fill="#e0e0e0"/></svg>
<svg class="a" style="left:758.8px;top:71.6px;" width="7.8" height="7.8" viewBox="0 0 16 16"><circle cx="3.500" cy="12.500" r="2" fill="#e0e0e0"/><path d="M2 8a6 6 0 0 1 6 6M2 3.500A10.500 10.500 0 0 1 12.500 14" fill="none" stroke="#e0e0e0" stroke-width="2.200"/></svg>
<svg class="a" style="left:697.5px;top:84.8px;" width="8.4" height="8.4" viewBox="0 0 16 16"><circle cx="8" cy="8" r="6.900" fill="#a5b7f3"/><path d="M3 7.800h10a5 4.600 0 0 1-10 0z" fill="#262c3b"/><ellipse cx="8" cy="11.300" rx="2.300" ry="1.200" fill="#a5b7f3"/></svg>
<span class="t" style="top:84.20px;left:707.8px;">sprite</span>
<svg class="a" style="left:779.5px;top:84.7px;" width="8.6" height="8.6" viewBox="0 0 16 16"><path d="M8 1.800C4.500 1.800 1.600 4.300.500 8c1.100 3.700 4 6.200 7.500 6.200s6.400-2.500 7.500-6.200C14.400 4.300 11.500 1.800 8 1.800z" fill="#e0e0e0"/><circle cx="8" cy="8" r="3.700" fill="#262c3b"/><circle cx="8" cy="8" r="1.800" fill="#e0e0e0"/></svg>
<svg class="a" style="left:697.5px;top:98.3px;" width="8.4" height="8.4" viewBox="0 0 16 16"><rect x="2" y="2" width="12" height="12" fill="none" stroke="#a5b7f3" stroke-width="2"/></svg>
<span class="t" style="top:97.70px;left:707.8px;">collision</span>
<svg class="a" style="left:779.5px;top:98.2px;" width="8.6" height="8.6" viewBox="0 0 16 16"><path d="M8 1.800C4.500 1.800 1.600 4.300.500 8c1.100 3.700 4 6.200 7.500 6.200s6.400-2.500 7.500-6.200C14.400 4.300 11.500 1.800 8 1.800z" fill="#e0e0e0"/><circle cx="8" cy="8" r="3.700" fill="#262c3b"/><circle cx="8" cy="8" r="1.800" fill="#e0e0e0"/></svg>
<svg class="a" style="left:684.1px;top:112.6px;" width="6.2" height="6.2" viewBox="0 0 16 16"><path d="M3 5.500l5 5 5-5" stroke="#a4a9b4" stroke-width="2" fill="none"/></svg>
<svg class="a" style="left:691px;top:111.8px;" width="8.4" height="8.4" viewBox="0 0 16 16"><rect x="5" y="5" width="6" height="6" fill="none" stroke="#a5b7f3" stroke-width="2"/><path d="M1 5V1h4M11 1h4v4M15 11v4h-4M5 15H1v-4" fill="none" stroke="#a5b7f3" stroke-width="2"/></svg>
<span class="t" style="top:111.20px;left:701.3px;">right</span>
<svg class="a" style="left:779.5px;top:111.7px;" width="8.6" height="8.6" viewBox="0 0 16 16"><path d="M8 1.800C4.500 1.800 1.600 4.300.500 8c1.100 3.700 4 6.200 7.500 6.200s6.400-2.500 7.500-6.200C14.400 4.300 11.500 1.800 8 1.800z" fill="#e0e0e0"/><circle cx="8" cy="8" r="3.700" fill="#262c3b"/><circle cx="8" cy="8" r="1.800" fill="#e0e0e0"/></svg>
<svg class="a" style="left:769px;top:111.8px;" width="8.4" height="8.4" viewBox="0 0 16 16"><path d="M6 1.500c-1.400 0-2.500 1.100-2.500 2.500v7H1v1.500C1 13.900 2.100 15 3.500 15h6c1.400 0 2.500-1.100 2.500-2.500V5h3V4c0-1.400-1.100-2.500-2.500-2.500z" fill="#e0e0e0"/></svg>
<svg class="a" style="left:758.8px;top:112.1px;" width="7.8" height="7.8" viewBox="0 0 16 16"><circle cx="3.500" cy="12.500" r="2" fill="#e0e0e0"/><path d="M2 8a6 6 0 0 1 6 6M2 3.500A10.500 10.500 0 0 1 12.500 14" fill="none" stroke="#e0e0e0" stroke-width="2.200"/></svg>
<svg class="a" style="left:697.5px;top:125.3px;" width="8.4" height="8.4" viewBox="0 0 16 16"><circle cx="8" cy="8" r="6.900" fill="#a5b7f3"/><path d="M3 7.800h10a5 4.600 0 0 1-10 0z" fill="#262c3b"/><ellipse cx="8" cy="11.300" rx="2.300" ry="1.200" fill="#a5b7f3"/></svg>
<span class="t" style="top:124.70px;left:707.8px;">sprite</span>
<svg class="a" style="left:779.5px;top:125.2px;" width="8.6" height="8.6" viewBox="0 0 16 16"><path d="M8 1.800C4.500 1.800 1.600 4.300.500 8c1.100 3.700 4 6.200 7.500 6.200s6.400-2.500 7.500-6.200C14.400 4.300 11.500 1.800 8 1.800z" fill="#e0e0e0"/><circle cx="8" cy="8" r="3.700" fill="#262c3b"/><circle cx="8" cy="8" r="1.800" fill="#e0e0e0"/></svg>
<svg class="a" style="left:697.5px;top:138.8px;" width="8.4" height="8.4" viewBox="0 0 16 16"><rect x="2" y="2" width="12" height="12" fill="none" stroke="#a5b7f3" stroke-width="2"/></svg>
<span class="t" style="top:138.20px;left:707.8px;">collision</span>
<svg class="a" style="left:779.5px;top:138.7px;" width="8.6" height="8.6" viewBox="0 0 16 16"><path d="M8 1.800C4.500 1.800 1.600 4.300.500 8c1.100 3.700 4 6.200 7.500 6.200s6.400-2.500 7.500-6.200C14.400 4.300 11.500 1.800 8 1.800z" fill="#e0e0e0"/><circle cx="8" cy="8" r="3.700" fill="#262c3b"/><circle cx="8" cy="8" r="1.800" fill="#e0e0e0"/></svg>
<svg class="a" style="left:684.1px;top:153.1px;" width="6.2" height="6.2" viewBox="0 0 16 16"><path d="M3 5.500l5 5 5-5" stroke="#a4a9b4" stroke-width="2" fill="none"/></svg>
<svg class="a" style="left:691px;top:152.3px;" width="8.4" height="8.4" viewBox="0 0 16 16"><rect x="5" y="5" width="6" height="6" fill="none" stroke="#a5b7f3" stroke-width="2"/><path d="M1 5V1h4M11 1h4v4M15 11v4h-4M5 15H1v-4" fill="none" stroke="#a5b7f3" stroke-width="2"/></svg>
<span class="t" style="top:151.70px;left:701.3px;">ball</span>
<svg class="a" style="left:779.5px;top:152.2px;" width="8.6" height="8.6" viewBox="0 0 16 16"><path d="M8 1.800C4.500 1.800 1.600 4.300.500 8c1.100 3.700 4 6.200 7.500 6.200s6.400-2.500 7.500-6.200C14.400 4.300 11.500 1.800 8 1.800z" fill="#e0e0e0"/><circle cx="8" cy="8" r="3.700" fill="#262c3b"/><circle cx="8" cy="8" r="1.800" fill="#e0e0e0"/></svg>
<svg class="a" style="left:769px;top:152.3px;" width="8.4" height="8.4" viewBox="0 0 16 16"><path d="M6 1.500c-1.400 0-2.500 1.100-2.500 2.500v7H1v1.500C1 13.900 2.100 15 3.500 15h6c1.400 0 2.500-1.100 2.500-2.500V5h3V4c0-1.400-1.100-2.500-2.500-2.500z" fill="#e0e0e0"/></svg>
<svg class="a" style="left:697.5px;top:165.8px;" width="8.4" height="8.4" viewBox="0 0 16 16"><circle cx="8" cy="8" r="6.900" fill="#a5b7f3"/><path d="M3 7.800h10a5 4.600 0 0 1-10 0z" fill="#262c3b"/><ellipse cx="8" cy="11.300" rx="2.300" ry="1.200" fill="#a5b7f3"/></svg>
<span class="t" style="top:165.20px;left:707.8px;">sprite</span>
<svg class="a" style="left:779.5px;top:165.7px;" width="8.6" height="8.6" viewBox="0 0 16 16"><path d="M8 1.800C4.500 1.800 1.600 4.300.500 8c1.100 3.700 4 6.200 7.500 6.200s6.400-2.500 7.500-6.200C14.400 4.300 11.500 1.800 8 1.800z" fill="#e0e0e0"/><circle cx="8" cy="8" r="3.700" fill="#262c3b"/><circle cx="8" cy="8" r="1.800" fill="#e0e0e0"/></svg>
<svg class="a" style="left:697.5px;top:179.3px;" width="8.4" height="8.4" viewBox="0 0 16 16"><rect x="2" y="2" width="12" height="12" fill="none" stroke="#a5b7f3" stroke-width="2"/></svg>
<span class="t" style="top:178.70px;left:707.8px;">collision</span>
<svg class="a" style="left:779.5px;top:179.2px;" width="8.6" height="8.6" viewBox="0 0 16 16"><path d="M8 1.800C4.500 1.800 1.600 4.300.500 8c1.100 3.700 4 6.200 7.500 6.200s6.400-2.500 7.500-6.200C14.400 4.300 11.500 1.800 8 1.800z" fill="#e0e0e0"/><circle cx="8" cy="8" r="3.700" fill="#262c3b"/><circle cx="8" cy="8" r="1.800" fill="#e0e0e0"/></svg>
<svg class="a" style="left:691px;top:192.8px;" width="8.4" height="8.4" viewBox="0 0 16 16"><circle cx="8" cy="8" r="6.900" fill="#a5b7f3"/><path d="M3 7.800h10a5 4.600 0 0 1-10 0z" fill="#262c3b"/><ellipse cx="8" cy="11.300" rx="2.300" ry="1.200" fill="#a5b7f3"/></svg>
<span class="t" style="top:192.20px;left:701.3px;">separator</span>
<svg class="a" style="left:779.5px;top:192.7px;" width="8.6" height="8.6" viewBox="0 0 16 16"><path d="M8 1.800C4.500 1.800 1.600 4.300.500 8c1.100 3.700 4 6.200 7.500 6.200s6.400-2.500 7.500-6.200C14.400 4.300 11.500 1.800 8 1.800z" fill="#e0e0e0"/><circle cx="8" cy="8" r="3.700" fill="#262c3b"/><circle cx="8" cy="8" r="1.800" fill="#e0e0e0"/></svg>
<svg class="a" style="left:684.1px;top:207.1px;" width="6.2" height="6.2" viewBox="0 0 16 16"><path d="M3 5.500l5 5 5-5" stroke="#a4a9b4" stroke-width="2" fill="none"/></svg>
<svg class="a" style="left:691px;top:206.3px;" width="8.4" height="8.4" viewBox="0 0 16 16"><rect x="5" y="5" width="6" height="6" fill="none" stroke="#a5b7f3" stroke-width="2"/><path d="M1 5V1h4M11 1h4v4M15 11v4h-4M5 15H1v-4" fill="none" stroke="#a5b7f3" stroke-width="2"/></svg>
<span class="t" style="top:205.70px;left:701.3px;">left_wall</span>
<svg class="a" style="left:779.5px;top:206.2px;" width="8.6" height="8.6" viewBox="0 0 16 16"><path d="M8 1.800C4.500 1.800 1.600 4.300.500 8c1.100 3.700 4 6.200 7.500 6.200s6.400-2.500 7.500-6.200C14.400 4.300 11.500 1.800 8 1.800z" fill="#e0e0e0"/><circle cx="8" cy="8" r="3.700" fill="#262c3b"/><circle cx="8" cy="8" r="1.800" fill="#e0e0e0"/></svg>
<svg class="a" style="left:769px;top:206.3px;" width="8.4" height="8.4" viewBox="0 0 16 16"><path d="M6 1.500c-1.400 0-2.500 1.100-2.500 2.500v7H1v1.500C1 13.900 2.100 15 3.500 15h6c1.400 0 2.500-1.100 2.500-2.500V5h3V4c0-1.400-1.100-2.500-2.500-2.500z" fill="#e0e0e0"/></svg>
<svg class="a" style="left:758.8px;top:206.6px;" width="7.8" height="7.8" viewBox="0 0 16 16"><circle cx="3.500" cy="12.500" r="2" fill="#e0e0e0"/><path d="M2 8a6 6 0 0 1 6 6M2 3.500A10.500 10.500 0 0 1 12.500 14" fill="none" stroke="#e0e0e0" stroke-width="2.200"/></svg>
<svg class="a" style="left:697.5px;top:219.8px;" width="8.4" height="8.4" viewBox="0 0 16 16"><rect x="2" y="2" width="12" height="12" fill="none" stroke="#a5b7f3" stroke-width="2"/></svg>
<span class="t" style="top:219.20px;left:707.8px;">collision</span>
<svg class="a" style="left:779.5px;top:219.7px;" width="8.6" height="8.6" viewBox="0 0 16 16"><path d="M8 1.800C4.500 1.800 1.600 4.300.500 8c1.100 3.700 4 6.200 7.500 6.200s6.400-2.500 7.500-6.200C14.400 4.300 11.500 1.800 8 1.800z" fill="#e0e0e0"/><circle cx="8" cy="8" r="3.700" fill="#262c3b"/><circle cx="8" cy="8" r="1.800" fill="#e0e0e0"/></svg>
<div class="a" style="left:674.5px;top:240px;width:50px;height:15px;background:#333b4f;border-radius:2px 2px 0 0"></div>
<span class="t" style="top:242.30px;left:682.5px;">Inspector</span>
<span class="t" style="top:242.30px;left:733px;color:#8e939e;">Node</span>
<svg class="a" style="left:790px;top:240.25px;" width="9.5" height="9.5" viewBox="0 0 16 16"><circle cx="8" cy="2.500" r="1.600" fill="#c8cad0"/><circle cx="8" cy="8" r="1.600" fill="#c8cad0"/><circle cx="8" cy="13.500" r="1.600" fill="#c8cad0"/></svg>
<div class="a" style="left:674.5px;top:254px;width:124.5px;height:202px;background:#333b4f;"></div>
<svg class="a" style="left:679.5px;top:259.7px;" width="8.6" height="8.6" viewBox="0 0 16 16"><path d="M2 1h7l4 4v10H2z" fill="#e0e0e0"/><path d="M9 1v4h4" fill="none" stroke="#333b4f" stroke-width="1.200"/><circle cx="12" cy="13" r="2.200" fill="#5fd7c8"/></svg>
<svg class="a" style="left:693.5px;top:259.6px;" width="8.8" height="8.8" viewBox="0 0 16 16"><path d="M1 3.500C1 2.700 1.700 2 2.500 2h3.500l1.500 2H13v2H4.500L2.500 13H1z" fill="#e0e0e0"/><path d="M5 7h10.500l-2.500 7H2.500z" fill="#e0e0e0"/></svg>
<svg class="a" style="left:709px;top:259.6px;" width="8.8" height="8.8" viewBox="0 0 16 16"><path d="M1.500 1.500h11l2 2v11h-13z" fill="#e0e0e0"/><rect x="4" y="2.500" width="6.500" height="4" fill="#333b4f"/><rect x="8" y="3" width="1.600" height="3" fill="#e0e0e0"/><circle cx="8" cy="10.500" r="2.300" fill="#333b4f"/></svg>
<svg class="a" style="left:762.5px;top:259.8px;" width="8.4" height="8.4" viewBox="0 0 16 16"><path d="M10.500 2L5 8l5.500 6" stroke="#e0e0e0" stroke-width="2" fill="none"/></svg>
<svg class="a" style="left:773.5px;top:259.8px;" width="8.4" height="8.4" viewBox="0 0 16 16"><path d="M5.500 2L11 8l-5.500 6" stroke="#6b7282" stroke-width="2" fill="none"/></svg>
<svg class="a" style="left:785.8px;top:259.6px;" width="8.8" height="8.8" viewBox="0 0 16 16"><path d="M4 4.500A5.300 5.300 0 1 1 2.800 9.500" stroke="#e0e0e0" stroke-width="2" fill="none"/><path d="M1 2l.500 5.500L7 6.500z" fill="#e0e0e0"/><path d="M8.500 5.500v3l2.200 1.500" stroke="#e0e0e0" stroke-width="1.600" fill="none"/></svg>
<svg class="a" style="left:680px;top:275.7px;" width="8.6" height="8.6" viewBox="0 0 16 16"><path d="M8 1L1.500 4.200v7.600L8 15l6.500-3.200V4.200z" fill="#e0e0e0"/><path d="M1.500 4.200L8 7.500l6.500-3.300M8 7.500V15" stroke="#333b4f" stroke-width="1.500" fill="none"/></svg>
<span class="t" style="top:275.10px;left:691px;">VisualScriptPropertyS</span>
<svg class="a" style="left:771px;top:275.8px;" width="8.4" height="8.4" viewBox="0 0 16 16"><circle cx="6.500" cy="6.500" r="4" fill="none" stroke="#e0e0e0" stroke-width="2.200"/><path d="M9.500 9.500l5 5" stroke="#e0e0e0" stroke-width="2.600" stroke-linecap="round"/></svg>
<svg class="a" style="left:786px;top:275.7px;" width="8.6" height="8.6" viewBox="0 0 16 16"><path d="M4 1v5M4 10v5M12 1v2M12 7.500V15" stroke="#e0e0e0" stroke-width="2"/><path d="M1.500 1v4.500L4 8l2.500-2.500V1M10 3.500h4v4h-4z" fill="#e0e0e0"/><rect x="2.500" y="9.500" width="3" height="5.500" fill="#e0e0e0"/><rect x="10.500" y="9" width="3" height="6" fill="#e0e0e0"/></svg>
<div class="a" style="left:676.5px;top:290px;width:120.5px;height:163.5px;background:#262c3b;"></div>
<div class="a" style="left:678px;top:291px;width:117px;height:13.3px;background:#3c4354;"></div>
<svg class="a" style="left:688px;top:293.2px;" width="8.6" height="8.6" viewBox="0 0 16 16"><path d="M8 1L1.500 4.200v7.600L8 15l6.500-3.200V4.200z" fill="#e0e0e0"/><path d="M1.500 4.200L8 7.500l6.500-3.300M8 7.500V15" stroke="#333b4f" stroke-width="1.500" fill="none"/></svg>
<span class="t" style="top:292.70px;left:698px;">VisualScriptPropertySet</span>
<span class="t" style="top:306.20px;left:691px;">Set Mode</span>
<span class="t" style="top:306.20px;left:753.5px;">Instance</span>
<svg class="a" style="left:787.9px;top:307.3px;" width="8" height="8" viewBox="0 0 16 16"><circle cx="8" cy="2.500" r="1.600" fill="#c6c9cf"/><circle cx="8" cy="8" r="1.600" fill="#c6c9cf"/><circle cx="8" cy="13.500" r="1.600" fill="#c6c9cf"/></svg>
<span class="t" style="top:319.70px;left:691px;">Base Type</span>
<span class="t" style="top:319.70px;left:753.5px;">Object</span>
<svg class="a" style="left:787.9px;top:320.8px;" width="8" height="8" viewBox="0 0 16 16"><circle cx="8" cy="2.500" r="1.600" fill="#c6c9cf"/><circle cx="8" cy="8" r="1.600" fill="#c6c9cf"/><circle cx="8" cy="13.500" r="1.600" fill="#c6c9cf"/></svg>
<span class="t" style="top:333.20px;left:691px;">Base Script</span>
<span class="t" style="top:333.20px;left:753.5px;">res://ball</span>
<svg class="a" style="left:786px;top:334.1px;" width="8.2" height="8.2" viewBox="0 0 16 16"><path d="M1 3.500c0-.800.700-1.500 1.500-1.500h4l1.500 2h6.500c.800 0 1.500.700 1.500 1.500v7c0 .800-.700 1.500-1.500 1.500h-12C1.700 14 1 13.300 1 12.500z" fill="#e0e0e0"/></svg>
<span class="t" style="top:346.70px;left:691px;">Property</span>
<span class="t" style="top:346.70px;left:753.5px;">direction</span>
<svg class="a" style="left:787.9px;top:347.8px;" width="8" height="8" viewBox="0 0 16 16"><circle cx="8" cy="2.500" r="1.600" fill="#c6c9cf"/><circle cx="8" cy="8" r="1.600" fill="#c6c9cf"/><circle cx="8" cy="13.500" r="1.600" fill="#c6c9cf"/></svg>
<span class="t" style="top:360.20px;left:691px;">Index</span>
<svg class="a" style="left:787.9px;top:361.3px;" width="8" height="8" viewBox="0 0 16 16"><circle cx="8" cy="2.500" r="1.600" fill="#c6c9cf"/><circle cx="8" cy="8" r="1.600" fill="#c6c9cf"/><circle cx="8" cy="13.500" r="1.600" fill="#c6c9cf"/></svg>
<span class="t" style="top:373.70px;left:691px;">Assign Op</span>
<span class="t" style="top:373.70px;left:753.5px;">Assign</span>
<svg class="a" style="left:787.9px;top:374.8px;" width="8" height="8" viewBox="0 0 16 16"><circle cx="8" cy="2.500" r="1.600" fill="#c6c9cf"/><circle cx="8" cy="8" r="1.600" fill="#c6c9cf"/><circle cx="8" cy="13.500" r="1.600" fill="#c6c9cf"/></svg>
<div class="a" style="left:678px;top:386px;width:117px;height:13.3px;background:#3c4354;"></div>
<svg class="a" style="left:712.5px;top:388.2px;" width="8.6" height="8.6" viewBox="0 0 16 16"><path d="M8 1L1.500 4.200v7.600L8 15l6.500-3.200V4.200z" fill="#e0e0e0"/><path d="M1.500 4.200L8 7.500l6.500-3.300M8 7.500V15" stroke="#333b4f" stroke-width="1.500" fill="none"/></svg>
<span class="t" style="top:387.70px;left:723.3px;">Resource</span>
<svg class="a" style="left:678.5px;top:402.7px;" width="6" height="6" viewBox="0 0 16 16"><path d="M5.500 3l5 5-5 5" stroke="#a9adb8" stroke-width="2" fill="none"/></svg>
<span class="t" style="top:401.10px;left:684.5px;">Resource</span>
<div class="a" style="left:678px;top:413px;width:117px;height:13.3px;background:#3c4354;"></div>
<svg class="a" style="left:711px;top:415.2px;" width="8.6" height="8.6" viewBox="0 0 16 16"><path d="M8 1L1.500 4.200v7.600L8 15l6.500-3.200V4.200z" fill="#e0e0e0"/><path d="M1.500 4.200L8 7.500l6.500-3.300M8 7.500V15" stroke="#333b4f" stroke-width="1.500" fill="none"/></svg>
<span class="t" style="top:414.70px;left:721.5px;">Reference</span>
<svg class="a" style="left:690.5px;top:428.8px;" width="8.4" height="8.4" viewBox="0 0 16 16"><path d="M6 1.500c-1.400 0-2.500 1.100-2.500 2.500v7H1v1.500C1 13.900 2.100 15 3.500 15h6c1.400 0 2.500-1.100 2.500-2.500V5h3V4c0-1.400-1.100-2.500-2.500-2.500z" fill="#e0e0e0"/></svg>
<span class="t" style="top:428.10px;left:701.5px;">Script</span>
<span class="t" style="top:428.10px;left:753.5px;">&lt;null&gt;</span>
<svg class="a" style="left:787.9px;top:428.8px;" width="8" height="8" viewBox="0 0 16 16"><circle cx="8" cy="2.500" r="1.600" fill="#c6c9cf"/><circle cx="8" cy="8" r="1.600" fill="#c6c9cf"/><circle cx="8" cy="13.500" r="1.600" fill="#c6c9cf"/></svg>
<div class="a" style="left:0px;top:457px;width:800px;height:5px;background:#1c202a;"></div>
<div class="a" style="left:0;top:460.200px;width:372px;height:2px;overflow:hidden"><span class="t" style="left:3px;top:0;font-size:7px;line-height:8px;color:#9a9eab;letter-spacing:.500px;white-space:nowrap">If KHTML Gecko If KHTML Khtml KHTML If KHTML Gecko If HTML KHTML Khtml KHTML lK</span></div>
</div></body></html>
